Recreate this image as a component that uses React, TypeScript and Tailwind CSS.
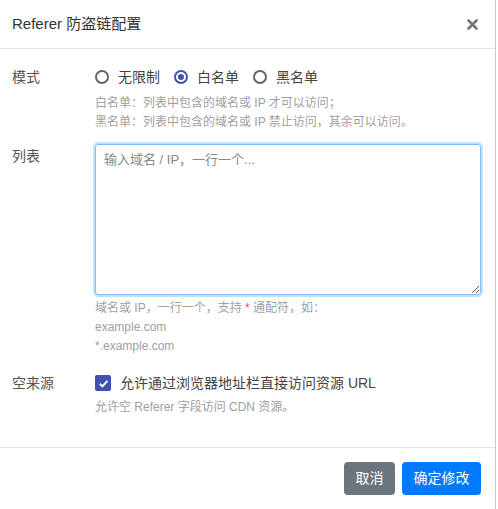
import { useState } from "react";

const FONT = "font-['Liberation_Sans','Noto_Sans_CJK_SC',sans-serif]";

function Radio({ checked, label, onClick }: { checked: boolean; label: string; onClick: () => void }) {
  return (
    <label className="flex cursor-pointer items-center gap-[9px]" onClick={onClick}>
      <span
        className={
          checked
            ? "flex h-[14px] w-[14px] items-center justify-center rounded-full border-2 border-[#3f51b5]"
            : "h-[14px] w-[14px] rounded-full border-2 border-[#666]"
        }
      >
        {checked && <span className="h-[6px] w-[6px] rounded-full bg-[#3f51b5]" />}
      </span>
      <span className="text-[14px] leading-5 text-[#444]">{label}</span>
    </label>
  );
}

export default function App() {
  const [mode, setMode] = useState("white");
  const [allowEmpty, setAllowEmpty] = useState(true);

  return (
    <div className={`${FONT} h-[509px] w-[496px] border-r border-[#c8c8c8] bg-white`}>
      <div className="flex h-[49px] items-center justify-between border-b border-[#dee2e6] pl-3 pr-[17px]">
        <h1 className="text-[15px] leading-5 text-[#333]">Referer 防盗链配置</h1>
        <button className="text-[#777]">
          <svg width="11" height="11" viewBox="0 0 11 11">
            <path d="M1.5 1.5l8 8M9.5 1.5l-8 8" stroke="currentColor" strokeWidth="2.6" strokeLinecap="round" />
          </svg>
        </button>
      </div>

      <div className="px-3 pt-[18px] pb-[30px]">
        <div className="flex">
          <div className="w-[83px] text-[14px] leading-5 text-[#555]">模式</div>
          <div className="flex-1">
            <div className="flex items-center gap-[14px]">
              <Radio checked={mode === "none"} label="无限制" onClick={() => setMode("none")} />
              <Radio checked={mode === "white"} label="白名单" onClick={() => setMode("white")} />
              <Radio checked={mode === "black"} label="黑名单" onClick={() => setMode("black")} />
            </div>
            <div className="mt-[7px] text-[12px] leading-[19px] text-[#a0a0a0]">
              <p>白名单：列表中包含的域名或 IP 才可以访问；</p>
              <p>黑名单：列表中包含的域名或 IP 禁止访问，其余可以访问。</p>
            </div>
          </div>
        </div>

        <div className="mt-[12px] flex">
          <div className="w-[83px] pt-[2px] text-[14px] leading-5 text-[#555]">列表</div>
          <div className="flex-1">
            <textarea
              placeholder="输入域名 / IP，一行一个..."
              className="block h-[151px] w-[386px] rounded-[3px] border border-[#80bdff] px-2 py-[5px] text-[13px] leading-5 text-[#333] shadow-[0_0_0_2px_rgba(0,123,255,0.22)] outline-none placeholder:text-[#888]"
            />
            <div className="mt-[4px] text-[12px] leading-[19px] text-[#a0a0a0]">
              <p>
                域名或 IP，一行一个，支持 <span className="text-[#e83e8c]">*</span> 通配符，如：
              </p>
              <p>example.com</p>
              <p>*.example.com</p>
            </div>
          </div>
        </div>

        <div className="mt-[17px] flex">
          <div className="w-[83px] text-[14px] leading-5 text-[#555]">空来源</div>
          <div className="flex-1">
            <label className="flex cursor-pointer items-center gap-[9px]" onClick={() => setAllowEmpty(!allowEmpty)}>
              <span
                className={
                  allowEmpty
                    ? "flex h-4 w-4 items-center justify-center rounded-[2px] bg-[#3f51b5]"
                    : "h-4 w-4 rounded-[2px] border-2 border-[#666]"
                }
              >
                {allowEmpty && (
                  <svg width="11" height="11" viewBox="0 0 11 11">
                    <path d="M1.8 5.8l2.6 2.6 5-5.6" fill="none" stroke="white" strokeWidth="2" />
                  </svg>
                )}
              </span>
              <span className="text-[14px] leading-5 text-[#444]">允许通过浏览器地址栏直接访问资源 URL</span>
            </label>
            <p className="mt-[5px] text-[12px] leading-[19px] text-[#a0a0a0]">允许空 Referer 字段访问 CDN 资源。</p>
          </div>
        </div>
      </div>

      <div className="flex justify-end gap-[7px] border-t border-[#dee2e6] px-[14px] pt-[14px]">
        <button className="h-[33px] w-[51px] rounded-[4px] bg-[#6c757d] text-[14px] text-white">取消</button>
        <button className="h-[33px] w-[79px] rounded-[4px] bg-[#007bff] text-[14px] text-white">确定修改</button>
      </div>
    </div>
  );
}
